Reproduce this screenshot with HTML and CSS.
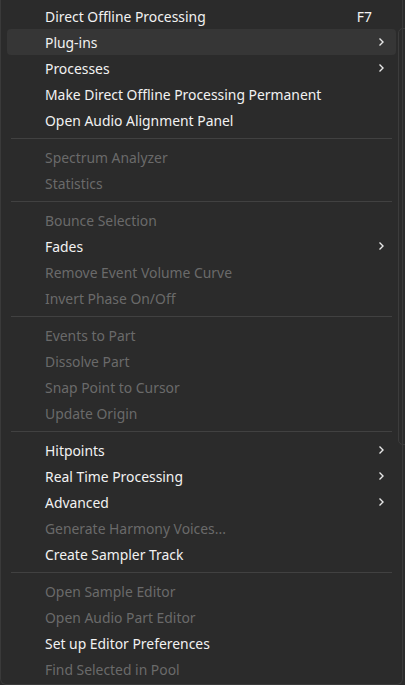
FILE: index.html
```html
<!DOCTYPE html>
<html>
<head>
<meta charset="utf-8">
<link rel="stylesheet" href="styles.css">
</head>
<body>
<div class="menu">
  <div class="scroll-track"></div>
  <div class="item"><span class="label">Direct Offline Processing</span><span class="shortcut">F7</span></div>
  <div class="item hover"><span class="label">Plug-ins</span><span class="arrow"><svg width="7" height="10" viewBox="0 0 7 10"><path d="M1.5 1.5 L5 5 L1.5 8.5" fill="none" stroke="#e6e6e6" stroke-width="1.4"/></svg></span></div>
  <div class="item"><span class="label">Processes</span><span class="arrow"><svg width="7" height="10" viewBox="0 0 7 10"><path d="M1.5 1.5 L5 5 L1.5 8.5" fill="none" stroke="#e6e6e6" stroke-width="1.4"/></svg></span></div>
  <div class="item"><span class="label">Make Direct Offline Processing Permanent</span></div>
  <div class="item"><span class="label">Open Audio Alignment Panel</span></div>
  <div class="sep"></div>
  <div class="item disabled"><span class="label">Spectrum Analyzer</span></div>
  <div class="item disabled"><span class="label">Statistics</span></div>
  <div class="sep"></div>
  <div class="item disabled"><span class="label">Bounce Selection</span></div>
  <div class="item"><span class="label">Fades</span><span class="arrow"><svg width="7" height="10" viewBox="0 0 7 10"><path d="M1.5 1.5 L5 5 L1.5 8.5" fill="none" stroke="#e6e6e6" stroke-width="1.4"/></svg></span></div>
  <div class="item disabled"><span class="label">Remove Event Volume Curve</span></div>
  <div class="item disabled"><span class="label">Invert Phase On/Off</span></div>
  <div class="sep"></div>
  <div class="item disabled"><span class="label">Events to Part</span></div>
  <div class="item disabled"><span class="label">Dissolve Part</span></div>
  <div class="item disabled"><span class="label">Snap Point to Cursor</span></div>
  <div class="item disabled"><span class="label">Update Origin</span></div>
  <div class="sep"></div>
  <div class="item"><span class="label">Hitpoints</span><span class="arrow"><svg width="7" height="10" viewBox="0 0 7 10"><path d="M1.5 1.5 L5 5 L1.5 8.5" fill="none" stroke="#e6e6e6" stroke-width="1.4"/></svg></span></div>
  <div class="item"><span class="label">Real Time Processing</span><span class="arrow"><svg width="7" height="10" viewBox="0 0 7 10"><path d="M1.5 1.5 L5 5 L1.5 8.5" fill="none" stroke="#e6e6e6" stroke-width="1.4"/></svg></span></div>
  <div class="item"><span class="label">Advanced</span><span class="arrow"><svg width="7" height="10" viewBox="0 0 7 10"><path d="M1.5 1.5 L5 5 L1.5 8.5" fill="none" stroke="#e6e6e6" stroke-width="1.4"/></svg></span></div>
  <div class="item disabled"><span class="label">Generate Harmony Voices...</span></div>
  <div class="item"><span class="label">Create Sampler Track</span></div>
  <div class="sep"></div>
  <div class="item disabled"><span class="label">Open Sample Editor</span></div>
  <div class="item disabled"><span class="label">Open Audio Part Editor</span></div>
  <div class="item"><span class="label">Set up Editor Preferences</span></div>
  <div class="item disabled"><span class="label">Find Selected in Pool</span></div>
</div>
</body>
</html>
```

FILE: styles.css
```css
html, body {
  margin: 0;
  padding: 0;
  background: #2b2b2b;
}
body {
  width: 405px;
  height: 685px;
  overflow: hidden;
  font-family: "Noto Sans", "Open Sans", sans-serif;
  font-size: 13.9px;
}
.menu {
  position: relative;
  box-sizing: border-box;
  width: 403px;
  height: 685px;
  background: #2b2b2b;
  border: 1px solid #3a3a3a;
  border-top: none;
  border-radius: 0 0 6px 6px;
  padding: 3px 6px 0 6px;
}
.scroll-track {
  position: absolute;
  left: 397px;
  top: 28px;
  width: 12px;
  height: 417px;
  border: 1px solid #3c3c3c;
  border-radius: 5px;
  box-sizing: border-box;
}
.item {
  display: flex;
  align-items: center;
  height: 26px;
  padding-left: 38px;
  padding-right: 10px;
  color: #f2f2f2;
  border-radius: 4px;
}
.item.hover {
  background: #363636;
}
.item.disabled {
  color: #6a6a6a;
}
.label {
  flex: 1;
  white-space: nowrap;
}
.shortcut {
  margin-right: 14px;
}
.arrow {
  display: flex;
  align-items: center;
  margin-right: 1px;
}
.sep {
  height: 1px;
  margin: 5px 4px 5px 4px;
  background: #414141;
}
```
